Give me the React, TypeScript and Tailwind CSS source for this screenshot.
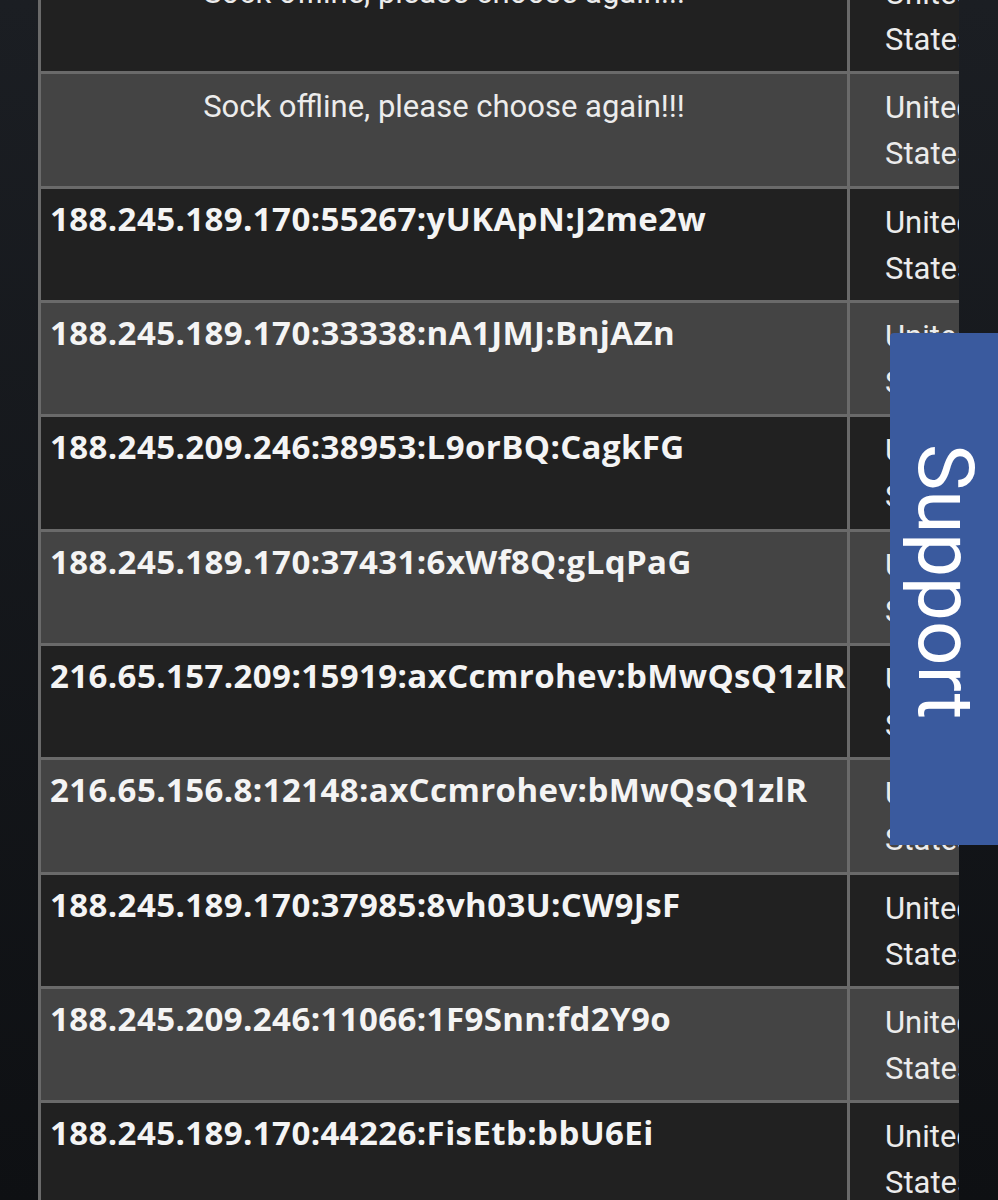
import React from 'react';

interface Row {
  text: string;
  offline?: boolean;
}

const rows: Row[] = [
  { text: 'Sock offline, please choose again!!!', offline: true },
  { text: 'Sock offline, please choose again!!!', offline: true },
  { text: '188.245.189.170:55267:yUKApN:J2me2w' },
  { text: '188.245.189.170:33338:nA1JMJ:BnjAZn' },
  { text: '188.245.209.246:38953:L9orBQ:CagkFG' },
  { text: '188.245.189.170:37431:6xWf8Q:gLqPaG' },
  { text: '216.65.157.209:15919:axCcmrohev:bMwQsQ1zlR' },
  { text: '216.65.156.8:12148:axCcmrohev:bMwQsQ1zlR' },
  { text: '188.245.189.170:37985:8vh03U:CW9JsF' },
  { text: '188.245.209.246:11066:1F9Snn:fd2Y9o' },
  { text: '188.245.189.170:44226:FisEtb:bbU6Ei' },
];

const SockRow: React.FC<{ row: Row; index: number }> = ({ row, index }) => {
  const bg = index % 2 === 0 ? 'bg-[#212121]' : 'bg-[#444444]';
  return (
    <div className={`flex h-[114.33px] flex-none border-b-[3px] border-[#6a6a6a] ${bg}`}>
      <div className="w-[809px] flex-none border-r-[3px] border-[#6a6a6a]">
        {row.offline ? (
          <div className="pt-[10px] text-center font-['Roboto',sans-serif] text-[31px] leading-[46px] text-[#ececec]">
            {row.text}
          </div>
        ) : (
          <div className="pl-[9px] pt-[7px] font-['Open_Sans',sans-serif] text-[33px] font-bold leading-[46px] tracking-[0.4px] text-[#f4f4f4]">
            {row.text}
          </div>
        )}
      </div>
      <div className="w-[170px] flex-none pl-[35px] pt-[11px] font-['Roboto',sans-serif] text-[31px] leading-[46px] text-[#ececec]">
        United States
      </div>
    </div>
  );
};

export default function App() {
  return (
    <div className="relative flex h-[1200px] w-[998px] overflow-hidden bg-gradient-to-b from-[#1b1e23] to-[#0e1013]">
      <div className="w-[38px] flex-none" />
      <div className="mt-[-40px] flex w-[921px] flex-none flex-col overflow-hidden border-l-[3px] border-[#6a6a6a]">
        {rows.map((row, i) => (
          <SockRow key={i} row={row} index={i} />
        ))}
      </div>

      {/* floating support tab */}
      <div className="absolute left-[890px] top-[333px] flex h-[512px] w-[120px] items-center justify-center rounded-tl-[4px] bg-[#3a5a9e]">
        <span className="pb-[14px] pr-[10px] font-['Roboto',sans-serif] text-[78px] leading-none text-white [writing-mode:vertical-rl]">
          Support
        </span>
      </div>
    </div>
  );
}
